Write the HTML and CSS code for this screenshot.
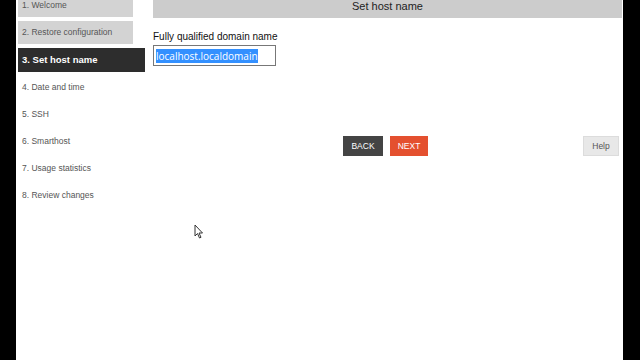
FILE: index.html
```html
<!DOCTYPE html>
<html lang="en">
<head>
    <meta charset="UTF-8">
    <title>Set host name</title>
    <link rel="stylesheet" href="styles.css">
</head>
<body>
    <div class="screen">
        <div class="sidebar">
            <div class="step">1. Welcome</div>
            <div class="step">2. Restore configuration</div>
            <div class="step active">3. Set host name</div>
            <div class="step plain">4. Date and time</div>
            <div class="step plain">5. SSH</div>
            <div class="step plain">6. Smarthost</div>
            <div class="step plain">7. Usage statistics</div>
            <div class="step plain">8. Review changes</div>
        </div>
        <div class="main">
            <div class="title">Set host name</div>
            <div class="field">
                <label class="field-label">Fully qualified domain name</label>
                <div class="textbox"><span class="selected">localhost.localdomain</span></div>
            </div>
            <div class="actions">
                <div class="nav-buttons">
                    <button type="button" class="btn btn-back">BACK</button>
                    <button type="button" class="btn btn-next">NEXT</button>
                </div>
                <button type="button" class="btn btn-help">Help</button>
            </div>
        </div>
        <svg class="pointer" width="10" height="16" viewBox="0 0 10 16">
            <path d="M1 1 L1 12 L3.5 9.5 L5.5 14 L7 13.3 L5 9 L8.5 9 Z" fill="#fff" stroke="#333" stroke-width="1"/>
        </svg>
    </div>
</body>
</html>
```

FILE: styles.css
```css
html, body {
    margin: 0;
    height: 100%;
    background: #000;
    font-family: "Liberation Sans", Arial, sans-serif;
    overflow: hidden;
}
.screen {
    position: relative;
    display: flex;
    margin: 0 17px 0 16px;
    height: 360px;
    background: #fff;
}
.sidebar {
    width: 137px;
    padding-left: 2px;
    box-sizing: border-box;
    margin-top: -6px;
}
.step {
    width: 115px;
    height: 23px;
    line-height: 23px;
    margin-bottom: 4px;
    padding-left: 4px;
    box-sizing: border-box;
    background: #d3d3d3;
    color: #555;
    font-size: 8.5px;
}
.step.active {
    width: 127px;
    height: 24px;
    line-height: 24px;
    background: #2d2d2d;
    color: #fff;
    font-weight: bold;
    font-size: 9.5px;
}
.step.plain {
    background: none;
}
.main {
    flex: 1;
    padding-right: 1px;
}
.title {
    height: 18px;
    line-height: 13px;
    background: #cccccc;
    color: #222;
    text-align: center;
    font-size: 11px;
}
.field {
    margin-top: 13px;
}
.field-label {
    display: block;
    font-size: 10px;
    line-height: 12px;
    color: #111;
    margin-bottom: 2px;
}
.textbox {
    width: 123px;
    height: 21px;
    border: 1px solid #777;
    box-sizing: border-box;
    padding: 3px 0 0 2px;
    font-family: "Open Sans", sans-serif;
    font-size: 10px;
    line-height: 15px;
}
.selected {
    background: #3390ff;
    color: #fff;
}
.actions {
    display: grid;
    grid-template-columns: 1fr auto 1fr;
    margin-top: 70px;
}
.nav-buttons {
    grid-column: 2;
    display: flex;
    gap: 7px;
    margin-right: 4px;
}
.btn {
    height: 20px;
    border: none;
    padding: 0;
    font-family: "Liberation Sans", Arial, sans-serif;
    font-size: 8.5px;
    color: #fff;
    cursor: pointer;
}
.btn-back {
    width: 40px;
    background: #444;
}
.btn-next {
    width: 38px;
    background: #e4502f;
}
.btn-help {
    grid-column: 3;
    justify-self: end;
    width: 36px;
    margin-right: 3px;
    background: #e8e8e8;
    border: 1px solid #dcdcdc;
    color: #555;
}
.pointer {
    position: absolute;
    left: 178px;
    top: 224px;
}
```
